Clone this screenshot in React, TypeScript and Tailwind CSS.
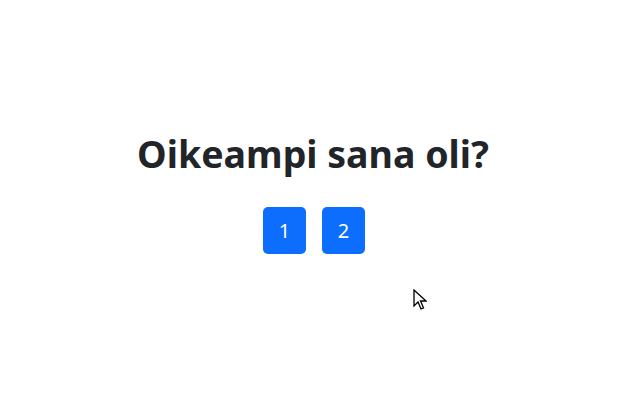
export default function App() {
  return (
    <div className="relative flex h-[400px] w-full flex-col items-center bg-white pt-[131px] font-['Noto_Sans',sans-serif]">
      <h1 className="text-[37.5px] font-bold leading-[1.2] text-[#212529]">Oikeampi sana oli?</h1>
      <div className="mt-[31px] flex gap-4 pl-[2px]">
        {["1", "2"].map((n) => (
          <button
            key={n}
            className="flex h-[47px] w-[43px] items-center justify-center rounded-[5px] bg-[#0d6efd] text-[20px] text-white"
          >
            {n}
          </button>
        ))}
      </div>
      <svg className="absolute left-[413px] top-[289px]" width="14" height="22" viewBox="0 0 14 22">
        <path d="M1 1 L1 17 L5 13 L8 20 L10.5 19 L7.5 12 L13 12 Z" fill="white" stroke="black" strokeWidth="1.3" strokeLinejoin="miter" />
      </svg>
    </div>
  );
}
